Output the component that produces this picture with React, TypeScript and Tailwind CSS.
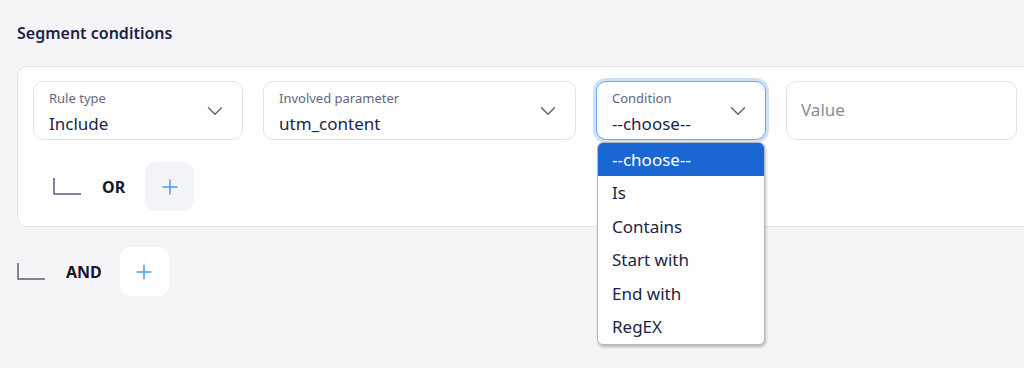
import { Plus, ChevronDown } from "lucide-react";

const font = { fontFamily: '"Noto Sans", "Open Sans", sans-serif' };

function Corner() {
  return (
    <svg width="29" height="17" viewBox="0 0 29 17" className="shrink-0">
      <path d="M1 0 V16 H28" fill="none" stroke="#5b5d80" strokeWidth="1.5" />
    </svg>
  );
}

function SelectBox({
  label,
  value,
  width,
  focused,
}: {
  label: string;
  value: string;
  width: string;
  focused?: boolean;
}) {
  return (
    <div
      className={`relative flex h-[59px] ${width} shrink-0 items-start justify-between rounded-[10px] border bg-white pl-[15px] pr-[14px] ${
        focused
          ? "border-[#6aa5f0] ring-[3px] ring-[#cfe2fb]"
          : "border-[#e2e3e8]"
      }`}
    >
      <div className="flex flex-col pt-[7px]">
        <span className="text-[13px] leading-[18px] text-[#64667f]">{label}</span>
        <span className="mt-[5px] text-[17px] leading-[24px] text-[#1d1f47]">{value}</span>
      </div>
      <ChevronDown className="mt-[16px] h-[26px] w-[26px] text-[#5f6176]" strokeWidth={1.3} />
    </div>
  );
}

const options = ["Is", "Contains", "Start with", "End with", "RegEX"];

export default function App() {
  return (
    <div className="h-[368px] w-[1024px] overflow-hidden bg-[#f5f5f8] pl-[17px] pt-[22px]" style={font}>
      <h2 className="text-[16px] font-semibold leading-[22px] text-[#1d1f47]">Segment conditions</h2>

      <div className="mt-[22px] w-[1030px] rounded-[10px] border border-[#e2e3e8] bg-white pb-[15px] pl-[15px] pt-[14px]">
        <div className="flex gap-[20px]">
          <SelectBox label="Rule type" value="Include" width="w-[210px]" />
          <SelectBox label="Involved parameter" value="utm_content" width="w-[313px]" />
          <div className="relative">
            <SelectBox label="Condition" value="--choose--" width="w-[170px]" focused />
            <div className="absolute left-[1px] top-[61px] z-10 w-[168px] overflow-hidden rounded-[6px] border border-[#b9b9bd] bg-white shadow-[1px_2px_3px_rgba(0,0,0,0.25)]">
              <div className="h-[33px] bg-[#1967d2] pl-[14px] text-[17px] leading-[33px] text-white">--choose--</div>
              {options.map((o) => (
                <div key={o} className="h-[33.5px] pl-[14px] text-[17px] leading-[33.5px] text-[#1d1f47]">
                  {o}
                </div>
              ))}
            </div>
          </div>
          <div className="flex h-[59px] w-[231px] shrink-0 items-center rounded-[10px] border border-[#e2e3e8] bg-white pl-[14px] text-[17px] text-[#8a8b98]">
            <span className="-mt-[2px]">Value</span>
          </div>
        </div>

        <div className="mt-[22px] flex items-center pl-[20px]">
          <Corner />
          <span className="ml-[20px] text-[16px] font-bold text-[#15162b]">OR</span>
          <button className="ml-[20px] flex h-[49px] w-[49px] items-center justify-center rounded-[10px] bg-[#f3f4f7]">
            <Plus className="h-[24px] w-[24px] text-[#4d9af7]" strokeWidth={1.5} />
          </button>
        </div>
      </div>

      <div className="mt-[20px] flex items-center">
        <Corner />
        <span className="ml-[20px] text-[16px] font-bold text-[#15162b]">AND</span>
        <button className="ml-[18px] flex h-[49px] w-[49px] items-center justify-center rounded-[10px] bg-white">
          <Plus className="h-[24px] w-[24px] text-[#4d9af7]" strokeWidth={1.5} />
        </button>
      </div>
    </div>
  );
}
